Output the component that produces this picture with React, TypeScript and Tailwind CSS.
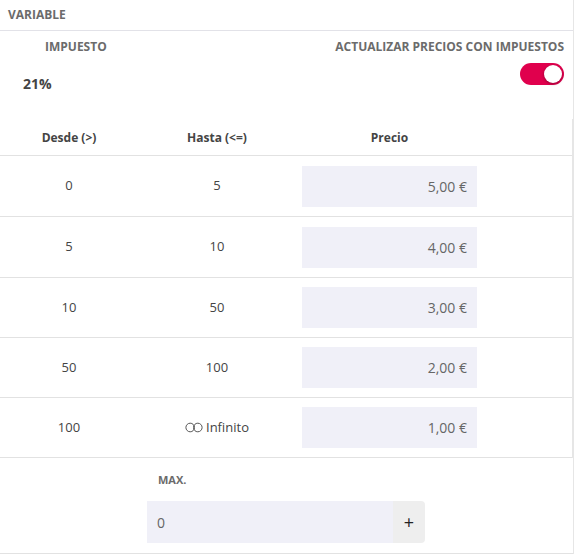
import React from "react";

const rows = [
  { from: "0", to: "5", price: "5,00 €", h: "h-[61px]" },
  { from: "5", to: "10", price: "4,00 €", h: "h-[61px]" },
  { from: "10", to: "50", price: "3,00 €", h: "h-[60px]" },
  { from: "50", to: "100", price: "2,00 €", h: "h-[60px]" },
  { from: "100", to: "inf", price: "1,00 €", h: "h-[60px]" },
];

function Infinity() {
  return (
    <svg width="18" height="11" viewBox="0 0 18 11" fill="none" stroke="#555" strokeWidth="1">
      <circle cx="5.2" cy="5.5" r="4.3" />
      <circle cx="12.8" cy="5.5" r="4.3" />
    </svg>
  );
}

export default function App() {
  return (
    <div
      className="w-[575px] h-[554px] bg-white overflow-hidden"
      style={{ fontFamily: '"Open Sans", "Liberation Sans", sans-serif' }}
    >
      <div className="w-[574px] border-r border-[#e6e6e6]">
        <div className="h-[31px] border-b border-[#e2e2e8] flex items-center pl-2">
          <span className="text-[12px] font-bold text-[#6b6b6b]">VARIABLE</span>
        </div>
        <div className="h-[88px] flex justify-between">
          <div className="flex flex-col">
            <span className="pl-[45px] pt-[8px] text-[12px] font-bold text-[#6b6b6b] leading-[16px]">IMPUESTO</span>
            <span className="pl-[23px] pt-[20px] text-[14px] font-bold text-[#444] leading-[18px]">21%</span>
          </div>
          <div className="flex flex-col items-end pr-[9px]">
            <span className="pt-[8px] text-[12px] font-bold text-[#6b6b6b] leading-[16px]">
              ACTUALIZAR PRECIOS CON IMPUESTOS
            </span>
            <div className="mt-[8px] w-[44px] h-[22px] rounded-full bg-[#e0004d] relative">
              <div className="absolute right-[2px] top-[2px] w-[18px] h-[18px] rounded-full bg-white shadow-[0_1px_3px_rgba(0,0,0,0.35)]" />
            </div>
          </div>
        </div>
        <div className="w-[573px] border-r border-[#e6e6e6]">
          <div className="h-[37px] border-b border-[#e2e2e2] flex items-center pt-[2px] text-[12px] font-bold text-[#444]">
            <div className="w-[138px] text-center">Desde (&gt;)</div>
            <div className="w-[158px] text-center">Hasta (&lt;=)</div>
            <div className="w-[187px] text-center">Precio</div>
          </div>
          {rows.map((r, i) => (
            <div key={i} className={`${r.h} border-b border-[#e2e2e2] flex items-center text-[13px] text-[#444]`}>
              <div className="w-[138px] text-center">{r.from}</div>
              <div className="w-[158px] flex justify-center items-center gap-[3px]">
                {r.to === "inf" ? (
                  <>
                    <Infinity />
                    <span>Infinito</span>
                  </>
                ) : (
                  r.to
                )}
              </div>
              <div className="w-[187px] px-[6px]">
                <div className="h-[41px] bg-[#f0f0f8] flex items-center justify-end pr-[10px] text-[14px] text-[#666]">
                  {r.price}
                </div>
              </div>
            </div>
          ))}
        </div>
        <div className="h-[96px] border-b border-[#e2e2e2] pl-[147px] pt-[14px]">
          <div className="pl-[11px] text-[11px] font-bold text-[#6b6b6b] leading-[16px]">MAX.</div>
          <div className="mt-[13px] w-[278px] h-[42px] flex rounded-r-[4px] overflow-hidden">
            <div className="flex-1 bg-[#f0f0f8] flex items-center pl-[10px] text-[14px] text-[#666]">0</div>
            <div className="w-[32px] bg-[#eeeeee] flex items-center justify-center text-[18px] font-normal text-[#222]">+</div>
          </div>
        </div>
      </div>
    </div>
  );
}
